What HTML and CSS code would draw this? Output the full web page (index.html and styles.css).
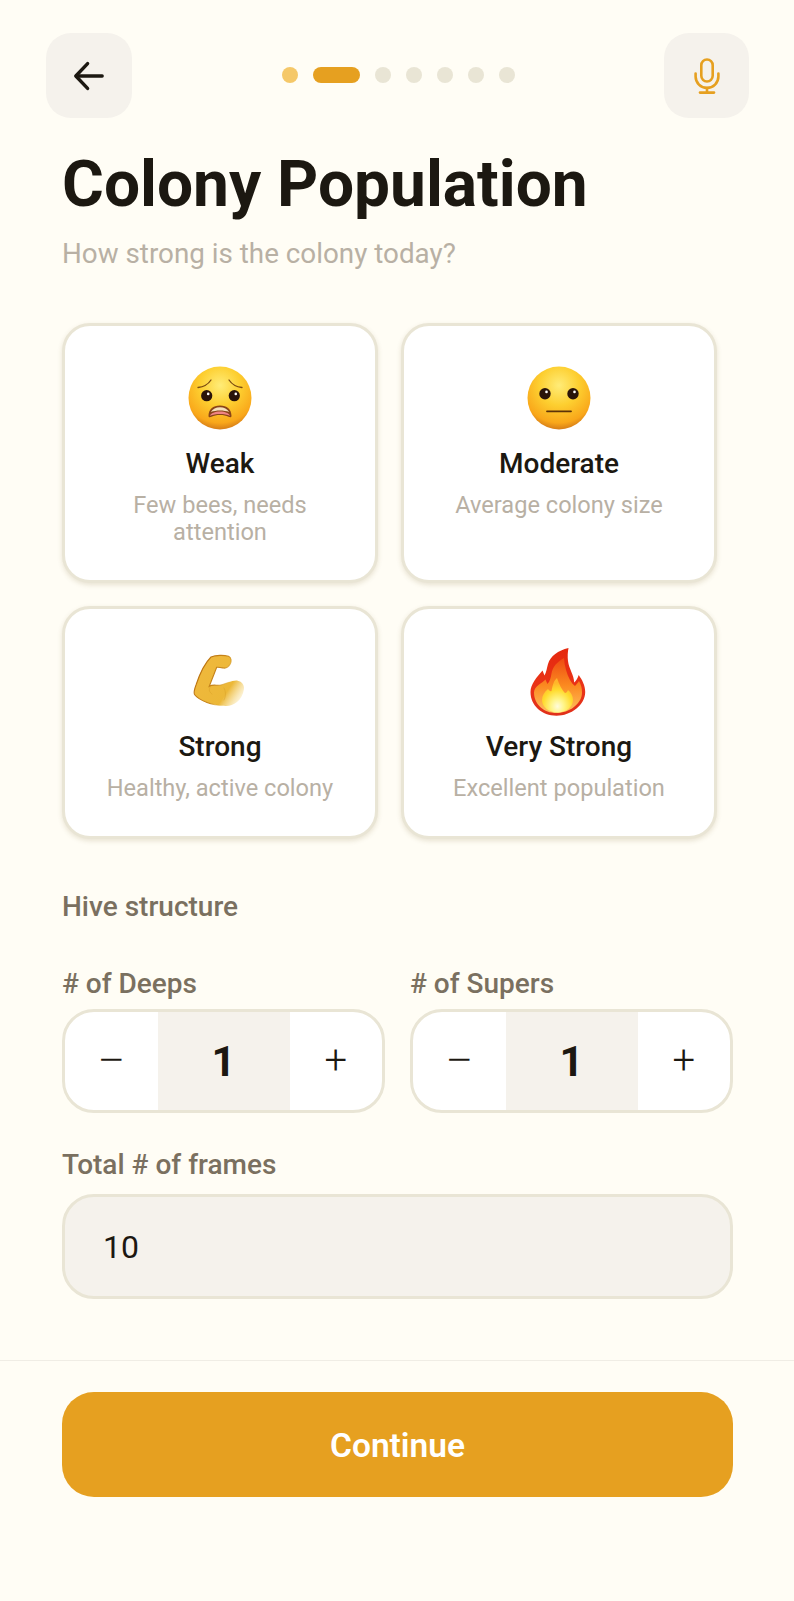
FILE: index.html
```html
<!DOCTYPE html>
<html lang="en">
<head>
<meta charset="utf-8">
<title>Colony Population</title>
<link rel="stylesheet" href="styles.css">
</head>
<body>
<div class="screen">
  <header class="topbar">
    <button class="icon-btn icon-btn-back" aria-label="Back">
      <svg class="icon-back" viewBox="0 0 34 34" fill="none" stroke="#1c1811" stroke-width="3.600" stroke-linecap="round" stroke-linejoin="round"><path d="M31 17H3.500"/><path d="M15.500 3.800 3 17l12.500 13.200"/></svg>
    </button>
    <div class="dots">
      <span class="dot dot-done"></span>
      <span class="dot dot-current"></span>
      <span class="dot"></span>
      <span class="dot"></span>
      <span class="dot"></span>
      <span class="dot"></span>
      <span class="dot"></span>
    </div>
    <button class="icon-btn" aria-label="Voice">
      <svg class="icon-mic" viewBox="0 0 26 36" fill="none" stroke="#e6a020" stroke-width="2.600" stroke-linecap="round" stroke-linejoin="round"><rect x="7.300" y="1.500" width="11.400" height="22" rx="5.700"/><path d="M1.600 15.500v3a11.400 11.400 0 0 0 22.800 0v-3"/><path d="M13 30v4.600"/><path d="M6 34.600h14"/></svg>
    </button>
  </header>

  <main class="content">
    <h1 class="title">Colony Population</h1>
    <p class="subtitle">How strong is the colony today?</p>

    <div class="cards">
      <button class="card">
        <svg class="emoji" viewBox="0 0 70 70">
          <defs>
            <radialGradient id="face1" cx="50%" cy="30%" r="70%"><stop offset="0" stop-color="#ffec78"/><stop offset=".45" stop-color="#fdcf30"/><stop offset=".85" stop-color="#f9a71a"/><stop offset="1" stop-color="#d67d18"/></radialGradient>
          </defs>
          <circle cx="35" cy="35" r="31.500" fill="url(#face1)"/>
          <path d="M13 24.500c5-.5 10-3 13-7.500" fill="none" stroke="#7a4a10" stroke-width="1.300" stroke-linecap="round"/>
          <path d="M57 24.500c-5-.5-10-3-13-7.500" fill="none" stroke="#7a4a10" stroke-width="1.300" stroke-linecap="round"/>
          <circle cx="21.700" cy="32.700" r="5.600" fill="#2a140a"/><circle cx="23.200" cy="30.900" r="1.300" fill="#fff"/>
          <circle cx="49.300" cy="32.700" r="5.600" fill="#2a140a"/><circle cx="50.800" cy="30.900" r="1.300" fill="#fff"/>
          <path d="M23.500 53c0-6.500 4.500-10.500 11.500-10.500S46.500 46.500 46.500 53c0 1.500-1.500 1.500-3 .8-2.500-1.200-5-1.800-8.500-1.800s-6 .6-8.500 1.800c-1.500.7-3 .7-3-.8Z" fill="#8a4518"/>
          <path d="M25.800 49c2-3.200 5-4.800 9.200-4.800s7.200 1.600 9.200 4.800c-5.500-2-12.900-2-18.400 0Z" fill="#f4e0ba"/>
          <path d="M25 52.800c1-2.500 5-4.200 10-4.200s9 1.700 10 4.200c-2.800-1.200-6-1.800-10-1.800s-7.200.6-10 1.800Z" fill="#f08484"/>
        </svg>
        <span class="card-title">Weak</span>
        <span class="card-sub">Few bees, needs attention</span>
      </button>
      <button class="card">
        <svg class="emoji" viewBox="0 0 70 70">
          <defs>
            <radialGradient id="face2" cx="50%" cy="30%" r="70%"><stop offset="0" stop-color="#ffec78"/><stop offset=".45" stop-color="#fdcf30"/><stop offset=".85" stop-color="#f9a71a"/><stop offset="1" stop-color="#d67d18"/></radialGradient>
          </defs>
          <circle cx="35" cy="35" r="31.500" fill="url(#face2)"/>
          <circle cx="21" cy="30.700" r="5.700" fill="#2a140a"/><circle cx="22.500" cy="28.900" r="1.300" fill="#fff"/>
          <circle cx="49" cy="30.700" r="5.700" fill="#2a140a"/><circle cx="50.500" cy="28.900" r="1.300" fill="#fff"/>
          <path d="M23 48.300h24" stroke="#5c3208" stroke-width="1.800" stroke-linecap="round"/>
        </svg>
        <span class="card-title">Moderate</span>
        <span class="card-sub">Average colony size</span>
      </button>
      <button class="card">
        <svg class="emoji" viewBox="0 0 70 70">
          <defs>
            <linearGradient id="arm" x1="10%" y1="15%" x2="100%" y2="75%"><stop offset="0" stop-color="#efb83c"/><stop offset=".72" stop-color="#ecb838"/><stop offset="1" stop-color="#f6d77c" stop-opacity=".3"/></linearGradient>
            <linearGradient id="armline" x1="0" y1="0" x2="100%" y2="40%"><stop offset="0" stop-color="#b5690d"/><stop offset=".6" stop-color="#c9881a"/><stop offset=".85" stop-color="#e8b93a" stop-opacity="0"/></linearGradient>
          </defs>
          <path d="M26 11C31 9 39 9 43.500 10.300 46.500 11.500 46.800 15.500 45.300 18 43.500 21 41 22.500 38.500 22 36 21.500 34 21 31.700 21.300 29.500 27 27 33 24.300 40.300 28 38 32 40 36 39 41 38 47 34 52.700 34.700 57 35.500 59.500 39 59 43 58 49 55.500 53.500 52 56 47.500 59.500 43 60.500 39 59.700 33 59.500 27 58.500 22 56.500 17 54.500 12 52 9.500 48.500 8.500 46.500 9.500 43 11 39 14 30 18 19 26 11Z" fill="url(#arm)" stroke="url(#armline)" stroke-width="1.100"/>
          <path d="M25 41c-1.500 3-.5 5.500 2 7M39 42c2 4 2 8 0 12" fill="none" stroke="#d59a22" stroke-width="1" stroke-linecap="round" opacity=".4"/>
        </svg>
        <span class="card-title">Strong</span>
        <span class="card-sub">Healthy, active colony</span>
      </button>
      <button class="card">
        <svg class="emoji" viewBox="0 0 70 70">
          <defs>
            <linearGradient id="flame1" x1="50%" y1="0" x2="50%" y2="100%"><stop offset="0" stop-color="#e5290e"/><stop offset=".6" stop-color="#ea3418"/><stop offset="1" stop-color="#e0301a"/></linearGradient>
            <linearGradient id="flame2" x1="50%" y1="0" x2="50%" y2="100%"><stop offset="0" stop-color="#ee4a12"/><stop offset=".5" stop-color="#fb8a20"/><stop offset="1" stop-color="#ffc060"/></linearGradient>
            <radialGradient id="flame3" cx="50%" cy="82%" r="68%"><stop offset="0" stop-color="#fffbdc"/><stop offset=".3" stop-color="#fff58a"/><stop offset=".7" stop-color="#ffdb2e"/><stop offset="1" stop-color="#ffb52a"/></radialGradient>
          </defs>
          <path d="M44.500 2C34 4.500 26.500 10 24 18c-1.200 4-1.500 8-3.500 11.500L18.500 24.500C13 31 6.500 38 6.500 46c0 13.500 11.500 23.700 26 23.700S61.200 59 61.200 46c0-6.500-3-12-6.500-17-1 3-2.500 5.500-4.500 7.500C50 29 45 23 44 15c-.5-4.500-.3-9 .5-13Z" fill="url(#flame1)"/>
          <path d="M40 12c-7 4-11.500 9-12.500 15.500-.7 4-1.500 7.500-4 10.500-.7-1.500-1.500-3-2-4.500-4 4-11.500 7-11.500 13C10 58.500 20 67 32.500 67S58 58 58 46.500c0-4.500-1-8-3-11.500-1 1.500-2.500 3.500-4 5-2-1.500-3.500-3.500-5-6-3.500-6.500-5.500-14-6-22Z" fill="url(#flame2)"/>
          <path d="M33 32c-3.500 3-4.500 8-5.500 13-1 1-2.500-.5-3.500-2-3.500 3-6 6.500-6 11 0 7 7 12.500 15.500 12.500S49 61 49 54c0-4-2-7.500-5-10-.5 1.500-1.500 3-3 3-3-3-6-9-8-15Z" fill="url(#flame3)"/>
        </svg>
        <span class="card-title">Very Strong</span>
        <span class="card-sub">Excellent population</span>
      </button>
    </div>

    <h2 class="section">Hive structure</h2>
    <div class="steppers">
      <div class="field">
        <label class="label">
          # of Deeps
        </label>
        <div class="stepper">
          <button class="step-btn"><span class="minus">−</span></button>
          <span class="step-value">1</span>
          <button class="step-btn">+</button>
        </div>
      </div>
      <div class="field">
        <label class="label">
          # of Supers
        </label>
        <div class="stepper">
          <button class="step-btn"><span class="minus">−</span></button>
          <span class="step-value">1</span>
          <button class="step-btn">+</button>
        </div>
      </div>
    </div>
    <div class="field field-total">
      <label class="label">Total # of frames</label>
      <div class="readonly">10</div>
    </div>
  </main>

  <footer class="footer">
    <button class="continue">Continue</button>
  </footer>
</div>
</body>
</html>
```

FILE: styles.css
```css
* { box-sizing: border-box; }

html, body {
  margin: 0;
  padding: 0;
  background: #fffdf5;
}

body {
  font-family: Roboto, "Liberation Sans", sans-serif;
  color: #1c1811;
}

button {
  font-family: inherit;
  color: inherit;
  border: 0;
  background: none;
  padding: 0;
}

.screen {
  width: 794px;
  height: 1601px;
  display: flex;
  flex-direction: column;
}

.topbar {
  display: flex;
  align-items: center;
  justify-content: space-between;
  padding: 33px 45px 0 46px;
}

.icon-btn {
  width: 85px;
  height: 85px;
  border-radius: 25px;
  background: #f5f2ec;
  display: flex;
  align-items: center;
  justify-content: center;
}

.icon-btn-back { width: 86px; }

.icon-back { width: 32px; height: 32px; }
.icon-mic { width: 26px; height: 36px; }

.dots {
  display: flex;
  align-items: center;
  gap: 15px;
  margin-bottom: 2px;
}

.dot {
  width: 16px;
  height: 16px;
  border-radius: 50%;
  background: #e9e5d5;
}

.dot-done { background: #f5c869; }

.dot-current {
  width: 47px;
  border-radius: 8px;
  background: #e6a020;
}

.content {
  flex: 1;
  padding: 0 61px 0 62px;
}

.title {
  margin: 32px 0 0;
  font-size: 64px;
  line-height: 70px;
  font-weight: 700;
}

.subtitle {
  margin: 16px 0 0;
  font-size: 27.800px;
  line-height: 36px;
  color: #b8b0a4;
}

.cards {
  margin-top: 51px;
  display: grid;
  grid-template-columns: 316px 316px;
  gap: 23px 23px;
}

.card {
  display: flex;
  flex-direction: column;
  align-items: center;
  padding: 37px 26px 34px;
  border: 3px solid #e9e5d5;
  border-radius: 28px;
  background: #fff;
  box-shadow: 0 2px 5px rgba(110, 90, 30, 0.16);
}

.emoji {
  width: 70px;
  height: 70px;
  display: block;
}

.card-title {
  margin-top: 14px;
  font-size: 28px;
  line-height: 34px;
  font-weight: 500;
}

.card-sub {
  margin-top: 11px;
  font-size: 23.600px;
  line-height: 27px;
  color: #b8b0a4;
}

.section {
  margin: 50px 0 0;
  font-size: 28px;
  line-height: 36px;
  font-weight: 500;
  color: #7a7060;
}

.steppers {
  margin-top: 41px;
  display: grid;
  grid-template-columns: 1fr 1fr;
  gap: 25px;
}

.label {
  display: block;
  font-size: 28px;
  line-height: 36px;
  font-weight: 500;
  color: #7a7060;
}

.stepper {
  margin-top: 7px;
  height: 104px;
  display: flex;
  align-items: stretch;
  border: 3px solid #e9e5d5;
  border-radius: 32px;
  background: #fff;
  overflow: hidden;
}

.step-btn {
  flex: 1;
  font-size: 40px;
  font-weight: 300;
  line-height: 1;
}

.minus {
  display: inline-block;
  transform: scaleX(1.25);
}

.step-value {
  width: 132px;
  background: #f5f2ec;
  display: flex;
  align-items: center;
  justify-content: center;
  font-size: 42px;
  font-weight: 700;
}

.field-total { margin-top: 34px; }

.readonly {
  margin-top: 11px;
  height: 105px;
  display: flex;
  align-items: center;
  padding: 0 38px;
  border: 3px solid #e9e5d5;
  border-radius: 32px;
  background: #f5f2ec;
  font-size: 32px;
}

.footer {
  border-top: 1px solid #f0ede5;
  padding: 31px 61px 104px 62px;
}

.continue {
  display: block;
  width: 100%;
  height: 105px;
  padding-top: 2px;
  border-radius: 32px;
  background: #e6a020;
  color: #fff;
  font-size: 33.500px;
  font-weight: 600;
}
```
